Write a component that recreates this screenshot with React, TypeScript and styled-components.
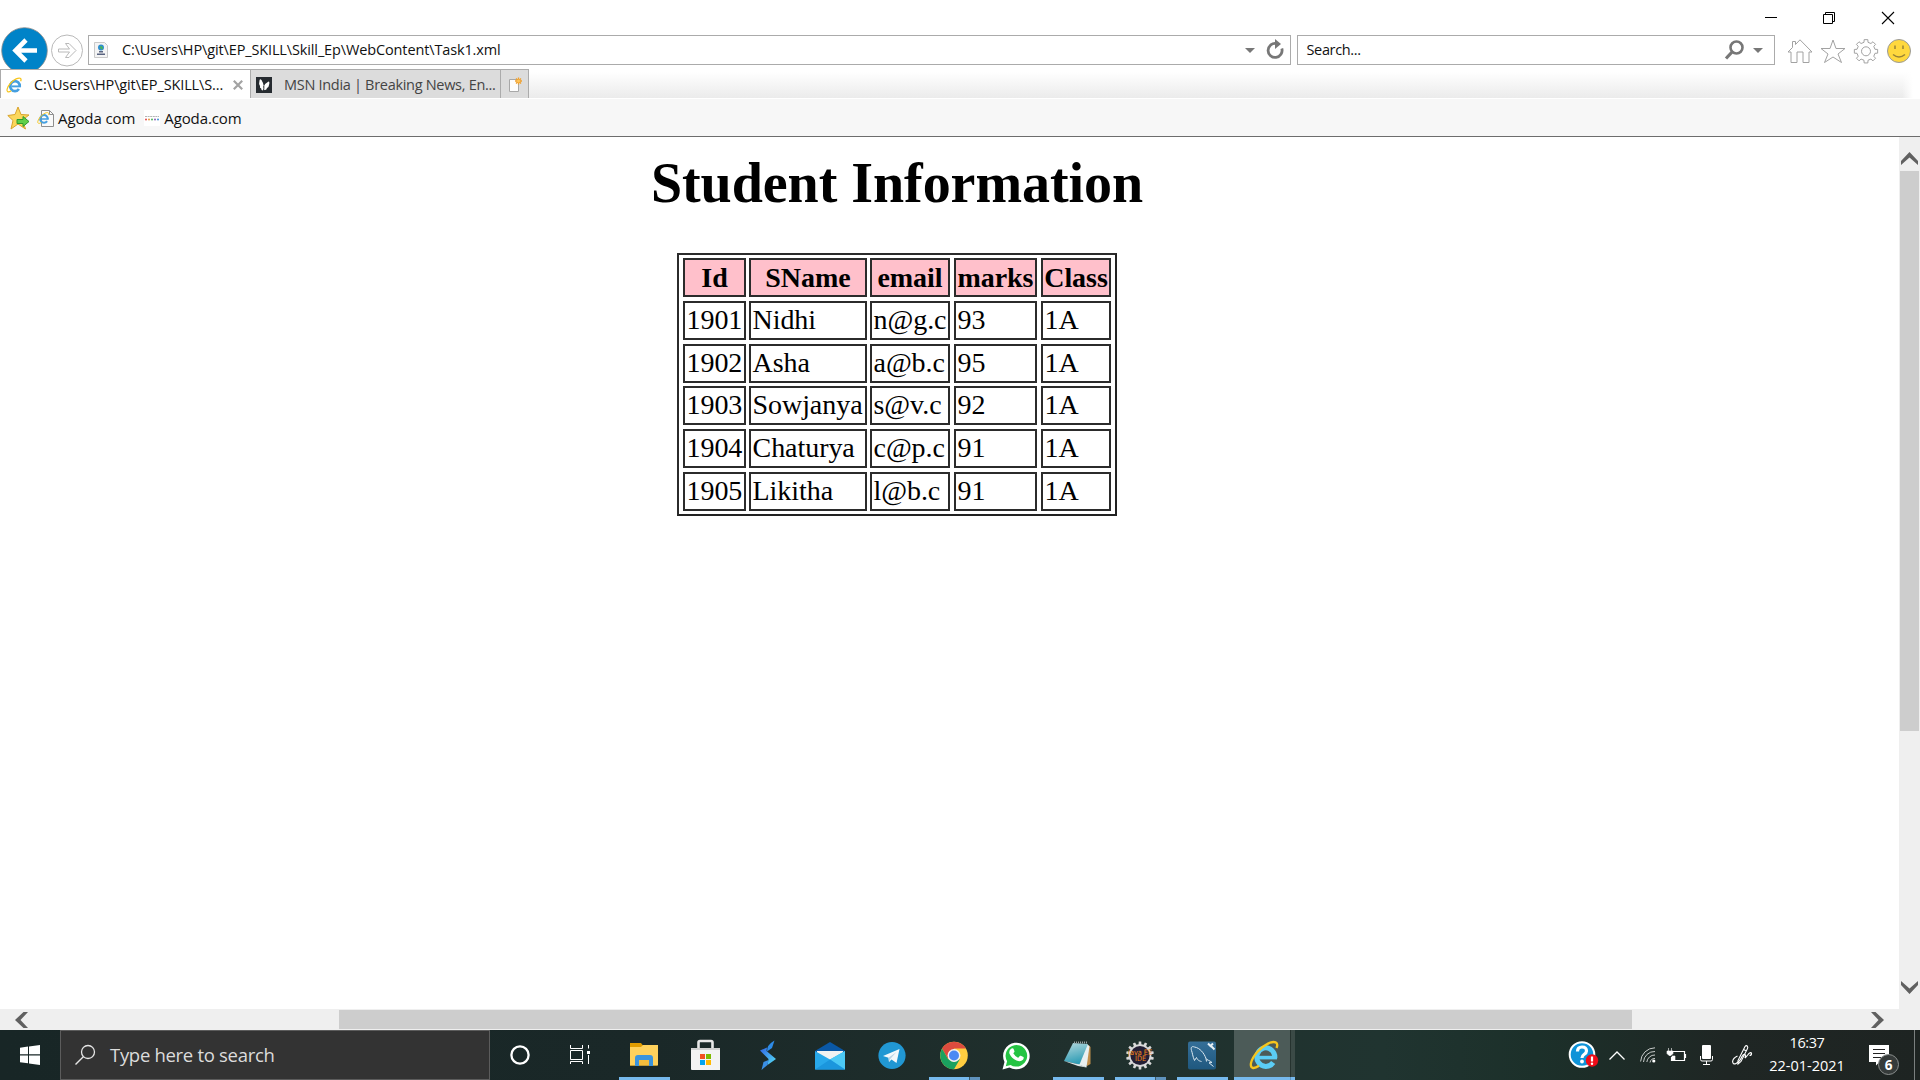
import React from 'react';
import styled, { createGlobalStyle } from 'styled-components';

const Global = createGlobalStyle`
  * { box-sizing: border-box; }
  html, body { margin: 0; padding: 0; background: #fff; }
  body { width: 1920px; height: 1080px; overflow: hidden; }
`;

const Screen = styled.div`
  width: 1920px;
  height: 1080px;
  display: flex;
  flex-direction: column;
  background: #fff;
  overflow: hidden;
  font-family: "Open Sans", "Noto Sans", sans-serif;
`;

const Text = styled.span<{ $size: number; $ls?: number; $color?: string; $ml?: number }>`
  font-size: ${p => p.$size}px;
  letter-spacing: ${p => p.$ls ?? 0}px;
  color: ${p => p.$color ?? '#111'};
  margin-left: ${p => p.$ml ?? 0}px;
  line-height: 22px;
  white-space: pre;
`;

const Icon = styled.svg<{ $w: number; $h?: number; $ml?: number; $mr?: number; $mt?: number }>`
  width: ${p => p.$w}px;
  height: ${p => p.$h ?? p.$w}px;
  margin-left: ${p => p.$ml ?? 0}px;
  margin-right: ${p => p.$mr ?? 0}px;
  margin-top: ${p => p.$mt ?? 0}px;
  flex: none;
  display: block;
  overflow: visible;
`;
const Spacer = styled.div`
  flex: 1;
`;

/* Browser chrome */
const TitleBar = styled.div`
  height: 27px;
  flex: none;
  display: flex;
  justify-content: flex-end;
  padding: 12px 25px 0 0;
  gap: 46px;
`;
const WinIcon = styled.svg`
  width: 13px;
  height: 13px;
  display: block;
  overflow: visible;
`;
const AddressRow = styled.div`
  height: 42px;
  flex: none;
  display: flex;
  overflow: hidden;
`;
const BackIcon = styled.svg`
  width: 49px;
  height: 42px;
  flex: none;
`;
const ForwardIcon = styled.svg`
  width: 34px;
  height: 34px;
  margin: 6px 4px 0 1px;
  flex: none;
`;
const Field = styled.div<{ $w: number }>`
  width: ${p => p.$w}px;
  height: 30px;
  margin-top: 8px;
  margin-right: 6px;
  border: 1px solid #ababab;
  display: flex;
  align-items: center;
  flex: none;
`;
const TabRow = styled.div`
  height: 30px;
  flex: none;
  display: flex;
  background: linear-gradient(#fff 0, #fff 3px, #ebebeb 29px, #fff 29px);
`;
const TabFade = styled.div`
  width: 18px;
  height: 30px;
  margin-left: auto;
  background: linear-gradient(90deg, rgba(255, 255, 255, 0), #fff 60%);
`;
const Tab = styled.div<{ $w: number; $active?: boolean }>`
  width: ${p => p.$w}px;
  height: 29px;
  border-top: 1px solid #ababab;
  border-right: 1px solid #ababab;
  border-left: ${p => (p.$active ? '1px solid #ababab' : '0')};
  background: ${p => (p.$active ? '#fff' : '#dcdcdc')};
  display: flex;
  align-items: center;
  padding-top: 1px;
`;
const FavBar = styled.div`
  height: 38px;
  flex: none;
  background: #f7f7f7;
  border-bottom: 1px solid #6d6d6d;
  display: flex;
  align-items: center;
  padding-top: 1px;
`;

/* Page */
const Viewport = styled.div`
  height: 872px;
  flex: none;
  display: flex;
`;
const Page = styled.div`
  width: 1899px;
  background: #fff;
  display: flex;
  flex-direction: column;
  font-family: "Liberation Serif", serif;
`;
const Heading = styled.h1`
  margin: 14px 0 0;
  width: 1794px;
  text-align: center;
  font-size: 56px;
  line-height: 64px;
  letter-spacing: -0.05px;
  font-weight: 700;
  color: #000;
  white-space: nowrap;
`;
const Sheet = styled.div`
  width: 440px;
  height: 263px;
  margin: 38px 0 0 677px;
  border: 2px solid #2b2b2b;
  border-right-color: #222;
  border-bottom-color: #222;
  padding: 3px 0 0 4px;
  display: grid;
  grid-template-columns: 66px 121px 84px 87px 70px;
  grid-template-rows: 43px 43px 42px 43px 43px 39px;
`;
const Cell = styled.div<{ $head?: boolean; $gap: number }>`
  height: 39px;
  margin-right: ${p => p.$gap}px;
  border: 2px solid #2b2b2b;
  background: ${p => (p.$head ? '#ffc0cb' : '#fff')};
  font-weight: ${p => (p.$head ? 700 : 400)};
  text-align: ${p => (p.$head ? 'center' : 'left')};
  font-size: 28px;
  line-height: 34px;
  letter-spacing: -0.05px;
  padding: ${p => (p.$head ? '1px 0 0' : '0 0 0 1.5px')};
  white-space: nowrap;
  color: #000;
`;
const VScroll = styled.div`
  width: 21px;
  background: #efefef;
  display: flex;
  flex-direction: column;
  align-items: center;
`;
const VThumb = styled.div`
  width: 19px;
  height: 560px;
  margin: 6px 0 auto;
  background: #cdcdcd;
`;
const HScroll = styled.div`
  height: 21px;
  flex: none;
  background: #efefef;
  display: flex;
  align-items: center;
`;
const HThumb = styled.div`
  width: 1293px;
  height: 19px;
  margin-left: 311px;
  margin-right: 239px;
  background: #cdcdcd;
`;

/* Taskbar */
const Taskbar = styled.div`
  height: 50px;
  flex: none;
  display: flex;
  background: linear-gradient(90deg, #182626 0, #1a2828 34%, #20302d 56%, #203430 72%, #1c302a 80%, #1f2624 90%, #1e2422 100%);
`;
const StartButton = styled.div`
  width: 60px;
  display: flex;
  align-items: center;
  justify-content: center;
`;
const SearchBox = styled.div`
  width: 430px;
  height: 50px;
  background: #333;
  border: 1px solid #5c5c5c;
  display: flex;
  align-items: center;
  padding-left: 14px;
`;
const SysButton = styled.div<{ $w: number }>`
  width: ${p => p.$w}px;
  display: flex;
  align-items: center;
`;
const AppButton = styled.div<{ $active?: boolean }>`
  width: 62px;
  height: 50px;
  display: flex;
  flex-direction: column;
  align-items: center;
  justify-content: space-between;
  background: ${p =>
    p.$active
      ? 'linear-gradient(90deg, transparent 1px, #4c5b58 1px, #4c5b58 57px, #26332f 57px, #26332f 58px, #3b4a46 58px)'
      : 'none'};
`;
const AppIcon = styled.svg`
  width: 32px;
  height: 32px;
  margin-top: 9px;
  display: block;
  overflow: visible;
`;
type Kind = 'none' | 'one' | 'many' | 'active';
const underlines: Record<Kind, string> = {
  none: 'none',
  one: '#76b9ed',
  many: 'linear-gradient(90deg, #76b9ed 40px, #3b5a6c 40px, #3b5a6c 41px, #5f93bd 41px)',
  active: 'linear-gradient(90deg, #76b9ed 56px, #5f93bd 56px, #5f93bd 57px, #76b9ed 57px)',
};
const Underline = styled.div<{ $kind: Kind }>`
  height: 3px;
  width: ${p => (p.$kind === 'active' ? 61 : 51)}px;
  align-self: ${p => (p.$kind === 'active' ? 'flex-end' : 'center')};
  background: ${p => underlines[p.$kind]};
`;
const Tray = styled.div`
  margin-left: auto;
  height: 50px;
  width: 352px;
  display: flex;
  align-items: center;
`;
const Clock = styled.div`
  width: 90px;
  height: 50px;
  margin-left: 10px;
  display: flex;
  flex-direction: column;
  align-items: center;
  padding-top: 2px;
  gap: 1px;
`;
const DesktopEdge = styled.div`
  width: 1px;
  height: 50px;
  margin-left: auto;
  margin-right: 5px;
  background: #7b807f;
`;

const IEArt = ({ bright }: { bright?: boolean }) => {
  const blue = bright ? '#5bcdf5' : '#459fe0';
  return (
    <>
      <path d="M26.800 19 A9 9.300 0 1 0 25.200 23.500" fill="none" stroke={blue} strokeWidth="5" />
      <path d="M11 18.600H29" stroke={blue} strokeWidth="3.600" />
      <path
        d="M11 26.800C5.500 30.500 2 29.500 3 24C4.500 17 12 8.500 20 4.600C26.500 1.500 31 3 28.500 9"
        fill="none"
        stroke="#f6c51d"
        strokeWidth="2.300"
      />
    </>
  );
};

const heads = ['Id', 'SName', 'email', 'marks', 'Class'];
const rows = [
  ['1901', 'Nidhi', 'n@g.c', '93', '1A'],
  ['1902', 'Asha', 'a@b.c', '95', '1A'],
  ['1903', 'Sowjanya', 's@v.c', '92', '1A'],
  ['1904', 'Chaturya', 'c@p.c', '91', '1A'],
  ['1905', 'Likitha', 'l@b.c', '91', '1A'],
];
const gaps = [3, 3, 4, 4, 0];

const gearPath = (cx: number, cy: number, r1: number, r2: number, n: number) => {
  const pts: string[] = [];
  for (let i = 0; i < n; i++) {
    const a = (i / n) * Math.PI * 2 - Math.PI / 2;
    const s = (Math.PI * 2) / n;
    [[-0.28, r1], [-0.2, r2], [0.2, r2], [0.28, r1]].forEach(([k, r]) => {
      pts.push(`${(cx + Math.cos(a + k * s) * r).toFixed(2)} ${(cy + Math.sin(a + k * s) * r).toFixed(2)}`);
    });
  }
  return `M${pts.join('L')}Z`;
};

const FolderIcon = () => (
  <AppIcon viewBox="0 0 32 32">
    <path d="M2 4h11l2 2.500h14v20H2z" fill="#e09c00" />
    <path d="M2 8h11l2-2h15v20.500H2z" fill="#ffd15c" />
    <path d="M7 27v-8q0-3 3-3h12q3 0 3 3v8h-4v-6h-10v6z" fill="#3b94dd" />
    <path d="M11 21h10v5h-10z" fill="#f5bd3c" />
  </AppIcon>
);
const StoreIcon = () => (
  <AppIcon viewBox="0 0 32 32">
    <path d="M8.500 10V3.500q0-1.500 1.500-1.500h11q1.500 0 1.500 1.500V10" fill="none" stroke="#e8e8e8" strokeWidth="2.600" />
    <path d="M1 9h29v22H2q-1 0-1-1z" fill="#f3f3f3" />
    <path d="M1 9h29v2H1z" fill="#d2d2d2" />
    <path d="M10 15h5v5h-5z" fill="#f25022" />
    <path d="M16 15h5v5h-5z" fill="#7fba00" />
    <path d="M10 21h5v5h-5z" fill="#00a4ef" />
    <path d="M16 21h5v5h-5z" fill="#ffb900" />
  </AppIcon>
);
const BoltIcon = () => (
  <AppIcon viewBox="0 0 32 32">
    <defs>
      <linearGradient id="bolt" x1="0" y1="0" x2="1" y2="1">
        <stop offset="0" stopColor="#2f63e6" />
        <stop offset="1" stopColor="#56e0f5" />
      </linearGradient>
    </defs>
    <path d="M22.500 1.500 L20 9 L15 12.500 Q14.500 6 22.500 1.500Z" fill="#2d8be8" />
    <path d="M8 11.500 L15 8.500 L14.500 12 L24 20 L15.500 26 L16.500 20 Z" fill="url(#bolt)" />
    <path d="M9.500 31 L11.500 23 L16.500 21 L15.500 26 Z" fill="#3a8fe6" />
  </AppIcon>
);
const MailIcon = () => (
  <AppIcon viewBox="0 0 32 32">
    <path d="M1 12 L16 3 L31 12 V15 H1Z" fill="#0a58a6" />
    <path d="M3 12h26v10H3z" fill="#f2f2f2" />
    <path d="M1 12 L16 20.500 L31 12 V30.500 H1Z" fill="#28a8ea" />
    <path d="M16 20.500 L31 12 V30.500Z" fill="#4cc9f5" />
    <path d="M16 20.500 L31 30.500 H1Z" fill="#1b96dd" />
  </AppIcon>
);
const TelegramIcon = () => (
  <AppIcon viewBox="0 0 32 32">
    <circle cx="16" cy="16.500" r="13.600" fill="#2197d3" />
    <path d="M7 17 L23.500 10 L20.500 24 L15.500 20.500 L13 23 L12.500 18.800 Z" fill="#f4f8fb" />
    <path d="M12.500 18.800 L20.500 13 L14.200 20 L13 23Z" fill="#b9d4e6" />
  </AppIcon>
);
const ChromeIcon = () => (
  <AppIcon viewBox="0 0 32 32">
    <circle cx="16" cy="16.500" r="13.800" fill="#ffcd40" />
    <path d="M4.050 9.600 A13.800 13.800 0 0 1 27.950 9.600 L16 9.600 L10 20Z" fill="#dd4b3e" />
    <path d="M4.050 9.600 A13.800 13.800 0 0 0 16 30.300 L22 19.900 L16 23 L10 20 Z" fill="#1aa15f" />
    <circle cx="16" cy="16.500" r="6.500" fill="#f1f1f1" />
    <circle cx="16" cy="16.500" r="5" fill="#4a89f3" />
  </AppIcon>
);
const WhatsAppIcon = () => (
  <AppIcon viewBox="0 0 32 32">
    <path d="M2.500 30.500 L4.500 23 A13.300 13.300 0 1 1 9.500 28.400 Z" fill="#fff" />
    <path d="M5.800 27.200 L7.100 22.300 A10.800 10.800 0 1 1 10.600 25.900 Z" fill="#25c443" />
    <path d="M11.500 9.500 q1.500-.8 2 .3 l1 2.500 q.2.700-1.200 2 q1.700 3.200 5 4.500 l1.500-1.800 q.5-.5 1 -.2 l2.600 1.300 q.8.800-.4 2.600 q-2.500 2.500-6.500.7 q-5-2.200-7-6.700 q-1-3.300 2-5.200Z" fill="#fff" />
  </AppIcon>
);
const NotepadIcon = () => (
  <AppIcon viewBox="0 0 32 32">
    <defs>
      <linearGradient id="pad" x1="0" y1="0" x2="0.300" y2="1">
        <stop offset="0" stopColor="#b5d9de" />
        <stop offset="1" stopColor="#2f9db5" />
      </linearGradient>
    </defs>
    <path d="M25 5 L28.500 8 L28.500 25 L25 27Z" fill="#c08f4c" />
    <path d="M24 5 L27.500 7 L24.500 28.500 L15 25Z" fill="#e9f0f1" />
    <path d="M11 4 L26 5 L17.500 25.500 L2 22Z" fill="url(#pad)" />
    <path d="M12 3.500h14" stroke="#9aa3a4" strokeWidth="2" strokeDasharray="1 1" />
    <path d="M2 22 L17.500 25.500 L24.500 28.500 L16 27Z" fill="#dfe7e8" />
  </AppIcon>
);
const EclipseText = styled.text`
  font-family: "DejaVu Sans", sans-serif;
  font-size: 7.5px;
  fill: #f58a1c;
`;
const EclipseIcon = () => (
  <AppIcon viewBox="0 0 32 32">
    <path d={gearPath(16, 16.5, 11.3, 14, 14)} fill="#d9d9d9" />
    <circle cx="16" cy="16.500" r="9.600" fill="#241f35" />
    <EclipseText x="4" y="16" textLength="24" lengthAdjust="spacingAndGlyphs">Java EE</EclipseText>
    <EclipseText x="11" y="22.300" textLength="11" lengthAdjust="spacingAndGlyphs">IDE</EclipseText>
  </AppIcon>
);
const MySqlIcon = () => (
  <AppIcon viewBox="0 0 32 32">
    <defs>
      <linearGradient id="sql" x1="0" y1="0" x2="0" y2="1">
        <stop offset="0" stopColor="#356f98" />
        <stop offset="1" stopColor="#1f587f" />
      </linearGradient>
    </defs>
    <rect x="2" y="2.500" width="28" height="28" rx="2" fill="url(#sql)" />
    <path
      d="M8.500 21.500 C6.500 17 6.500 14 5.500 11.500 C4.500 8 6 7 8.500 8 C14 9 18 14 20 19.500 C20.500 21 24 21.500 26 23.500 L23 23.800 L27.500 27.500 M8.500 21.500 L10.500 18.500 C12 22 14 22 15.500 22.500 M20 19.500 L20.500 22.500"
      fill="none"
      stroke="#dce9f1"
      strokeWidth="1"
    />
    <path d="M22 4.500 L24.500 7 L27 4.500 M24.500 6.500 L28.500 10.500" stroke="#e8f0f5" strokeWidth="2" fill="none" />
  </AppIcon>
);
const IETaskIcon = () => (
  <AppIcon viewBox="0 0 32 32">
    <IEArt bright />
  </AppIcon>
);

const apps: { icon: React.FC; kind: Kind }[] = [
  { icon: FolderIcon, kind: 'one' },
  { icon: StoreIcon, kind: 'none' },
  { icon: BoltIcon, kind: 'none' },
  { icon: MailIcon, kind: 'none' },
  { icon: TelegramIcon, kind: 'none' },
  { icon: ChromeIcon, kind: 'many' },
  { icon: WhatsAppIcon, kind: 'none' },
  { icon: NotepadIcon, kind: 'one' },
  { icon: EclipseIcon, kind: 'many' },
  { icon: MySqlIcon, kind: 'one' },
  { icon: IETaskIcon, kind: 'active' },
];

const BadgeText = styled.text<{ $size: number }>`
  font-family: "Open Sans", sans-serif;
  font-weight: 700;
  font-size: ${p => p.$size}px;
  fill: #fff;
  text-anchor: middle;
`;

export default function App() {
  return (
    <>
      <Global />
      <Screen>
        <TitleBar>
          <WinIcon viewBox="0 0 13 13"><path d="M1 5.500h12" stroke="#000" /></WinIcon>
          <WinIcon viewBox="0 0 13 13"><path d="M.5 2.500h9v9h-9z M2.500 2.500v-2h9v9h-2" fill="none" stroke="#000" /></WinIcon>
          <WinIcon viewBox="0 0 13 13"><path d="M0 0 12 12M12 0 0 12" stroke="#000" strokeWidth="1.100" /></WinIcon>
        </TitleBar>

        <AddressRow>
          <BackIcon viewBox="0 0 49 42">
            <circle cx="24.500" cy="23.500" r="22.800" fill="#0083c8" stroke="#8a8a8a" strokeWidth="0.800" />
            <path d="M37 23.500H15M26 13 15.500 23.500 26 34" fill="none" stroke="#fff" strokeWidth="4.600" />
          </BackIcon>
          <ForwardIcon viewBox="0 0 34 34">
            <circle cx="17" cy="17.500" r="15.500" fill="#fff" stroke="#b9b9b9" />
            <path d="M8.500 16h11l-4-5.500h3.500l7 7-7 7H15.500l4-5.500h-11z" fill="#fff" stroke="#b9b9b9" />
          </ForwardIcon>
          <Field $w={1203}>
            <Icon viewBox="0 0 14 16" $w={14} $h={16} $ml={5}>
              <path d="M.5.5h10l3 3v12H.5z" fill="#f4f4f4" stroke="#c9c9c9" />
              <circle cx="7" cy="5.500" r="3" fill="#2f8fd0" />
              <path d="M5.500 5q2-2 3 0t-1 2.500" fill="#49b45a" />
              <path d="M5 9h4v1.500H5zM3 11.500h8v1.500H3z" fill="#5a6480" />
            </Icon>
            <Text $size={14.5} $ls={-0.13} $ml={14}>C:\Users\HP\git\EP_SKILL\Skill_Ep\WebContent\Task1.xml</Text>
            <Spacer />
            <Icon viewBox="0 0 10 5" $w={10} $h={5} $mr={11} $mt={1}><path d="M0 0h10L5 5z" fill="#777" /></Icon>
            <Icon viewBox="0 0 18 20" $w={18} $h={20} $mr={6} $mt={-2}>
              <path d="M10 4.500A7 7 0 1 0 15.800 9.500" fill="none" stroke="#777" strokeWidth="2.800" />
              <path d="M9 0l6 5-6 5z" fill="#777" />
            </Icon>
          </Field>
          <Field $w={478}>
            <Text $size={14.5} $ls={-0.35} $ml={8.5}>Search...</Text>
            <Spacer />
            <Icon viewBox="0 0 19 20" $w={19} $h={20} $mr={9}>
              <circle cx="11.500" cy="7.500" r="6" fill="none" stroke="#777" strokeWidth="2.600" />
              <path d="M7.500 11.500 1 18.500" stroke="#777" strokeWidth="3.200" />
            </Icon>
            <Icon viewBox="0 0 10 5" $w={10} $h={5} $mr={11} $mt={1}><path d="M0 0h10L5 5z" fill="#777" /></Icon>
          </Field>
          <Icon viewBox="0 0 26 25" $w={26} $h={25} $ml={6} $mt={12}>
            <path d="M1 13 5.500 8.500V2.500H8.500V5.500L13 .8 25 13H22V23.500H16V13H10v10.500H4V13z" fill="#fff" stroke="#a2a2a2" />
          </Icon>
          <Icon viewBox="0 0 26 25" $w={26} $h={25} $ml={7} $mt={12}>
            <path d="M13 1 16 9.500H25L18 15 21.500 23.500 13 18 4.500 23.500 8 15 1 9.500H10Z" fill="#fff" stroke="#a2a2a2" />
          </Icon>
          <Icon viewBox="0 0 26 25" $w={26} $h={25} $ml={7} $mt={12}>
            <path d={gearPath(13, 12.3, 9.2, 11.8, 8)} fill="#fff" stroke="#a2a2a2" />
            <circle cx="13" cy="12.300" r="4.500" fill="#fff" stroke="#a2a2a2" />
          </Icon>
          <Icon viewBox="0 0 24 24" $w={24} $ml={8} $mt={12}>
            <circle cx="12" cy="12" r="11.500" fill="#ffd83e" stroke="#9a9a9a" />
            <path d="M8 6.500v3.500M16 6.500v3.500M6 15.500q6 5 12 0" fill="none" stroke="#9a8336" strokeWidth="1.500" />
          </Icon>
        </AddressRow>

        <TabRow>
          <Tab $w={251} $active>
            <Icon viewBox="1 2 30 28" $w={16} $h={16} $ml={5} $mr={12}><IEArt /></Icon>
            <Text $size={14.5} $ls={-0.12}>C:\Users\HP\git\EP_SKILL\S...</Text>
            <Spacer />
            <Icon viewBox="0 0 10 10" $w={10} $mr={7}>
              <path d="M.8.8 9.200 9.200M9.200.8.8 9.200" stroke="#a3a3a3" strokeWidth="2.200" />
            </Icon>
          </Tab>
          <Tab $w={250}>
            <Icon viewBox="0 0 16 16" $w={16} $ml={5} $mr={12}>
              <rect width="16" height="16" fill="#262b30" />
              <path d="M7 13.500Q5 13.500 5.200 11.500Q3.500 11 4 9Q2.500 7 3.500 3.500Q4 1.500 5.500 3Q7.500 6 7.800 9.500Q9.500 6 12.500 4.500Q14 4.500 13 8Q12.800 10.500 11 11Q10.500 13.500 8.500 13Z" fill="#fff" />
              <path d="M7.500 14.500Q8 11 7.800 9" fill="none" stroke="#262b30" />
            </Icon>
            <Text $size={14.5} $ls={-0.3} $color="#444">MSN India | Breaking News, En...</Text>
          </Tab>
          <Tab $w={28}>
            <Icon viewBox="0 0 16 16" $w={16} $ml={7}>
              <path d="M1.500 2.500h9v12h-9z" fill="#fdfdfd" stroke="#a8a8a8" />
              <path d="M10.500.5v7M7 4h7M8 1.500l5 5M13 1.500l-5 5" stroke="#f0a02c" strokeWidth="1.300" />
              <circle cx="10.500" cy="4" r="1.500" fill="#ffc65a" />
            </Icon>
          </Tab>
          <TabFade />
        </TabRow>

        <FavBar>
          <Icon viewBox="0 0 23 24" $w={23} $h={24} $ml={7}>
            <path d="M11 1 14 8.500 22 9 15.500 14 18.500 23 11 18 4 23 6 14.500.8 9.500 8 8.500Z" fill="#fbd75b" stroke="#d9a32c" />
            <path d="M10 13.500h6V10.500L22 15.500 16 20.500V17.500H10z" fill="#5fd04a" stroke="#2f9a2c" />
          </Icon>
          <Icon viewBox="0 0 16 17" $w={16} $h={17} $ml={8}>
            <path d="M3.500.5h8l4 4v12h-12z" fill="#fafafa" stroke="#8f8f8f" />
            <path d="M11.500.5v4h4" fill="none" stroke="#8f8f8f" />
            <svg x="-1" y="2" width="12.500" height="12" viewBox="1 2 30 28"><IEArt /></svg>
          </Icon>
          <Text $size={15} $ls={-0.1} $ml={4}>Agoda com</Text>
          <Icon viewBox="0 0 16 16" $w={16} $ml={9}>
            <path d="M0 0h16v16H0z" fill="#fff" />
            <path d="M1 6.500h14" stroke="#b5b5b5" strokeDasharray="2 .6" />
            <circle cx="2" cy="9.500" r="1" fill="#e0494d" />
            <circle cx="5" cy="9.500" r="1" fill="#e89a45" />
            <circle cx="8" cy="9.500" r="1" fill="#4cb45c" />
            <circle cx="11" cy="9.500" r="1" fill="#8a5fb5" />
            <circle cx="14" cy="9.500" r="1" fill="#4590d8" />
          </Icon>
          <Text $size={15} $ls={-0.1} $ml={4}>Agoda.com</Text>
        </FavBar>

        <Viewport>
          <Page>
            <Heading>Student Information</Heading>
            <Sheet>
              {heads.map((h, i) => <Cell key={h} $head $gap={gaps[i]}>{h}</Cell>)}
              {rows.map(r => r.map((c, i) => <Cell key={r[0] + i} $gap={gaps[i]}>{c}</Cell>))}
            </Sheet>
          </Page>
          <VScroll>
            <Icon viewBox="0 0 17 13" $w={17} $h={13} $mt={15}>
              <path d="M0 9 8.500 0 17 9V13L8.500 5.500 0 13z" fill="#606060" />
            </Icon>
            <VThumb />
            <Icon viewBox="0 0 17 13" $w={17} $h={13} $mt={0}>
              <path d="M0 0 8.500 7.500 17 0V4L8.500 13 0 4z" fill="#606060" />
            </Icon>
            <Icon viewBox="0 0 1 1" $w={1} $h={15} />
          </VScroll>
        </Viewport>
        <HScroll>
          <Icon viewBox="0 0 13 16" $w={13} $h={16} $ml={15}>
            <path d="M8.500 0H13L5.500 8 13 16H8.500L0 8z" fill="#606060" />
          </Icon>
          <HThumb />
          <Icon viewBox="0 0 13 16" $w={13} $h={16}>
            <path d="M4.500 0H0L7.500 8 0 16H4.500L13 8z" fill="#606060" />
          </Icon>
        </HScroll>

        <Taskbar>
          <StartButton>
            <Icon viewBox="0 0 20 20" $w={20}>
              <path d="M0 2.800 8 1.600V9.300H0zM9 1.500 20 0V9.300H9zM0 10.400H8V18.300L0 17.200zM9 10.400H20V20L9 18.400z" fill="#fff" />
            </Icon>
          </StartButton>
          <SearchBox>
            <Icon viewBox="0 0 20 20" $w={20}>
              <circle cx="13" cy="7" r="6.500" fill="none" stroke="#e6e6e6" strokeWidth="1.300" />
              <path d="M8.300 11.700.5 19.500" stroke="#e6e6e6" strokeWidth="1.400" />
            </Icon>
            <Text $size={18.5} $ls={-0.3} $color="#dcdcdc" $ml={15}>Type here to search</Text>
          </SearchBox>
          <SysButton $w={60}>
            <Icon viewBox="0 0 20 20" $w={20} $ml={20}>
              <circle cx="10" cy="10" r="8.600" fill="none" stroke="#fff" strokeWidth="2.300" />
            </Icon>
          </SysButton>
          <SysButton $w={63}>
            <Icon viewBox="0 0 20 20" $w={20} $ml={20}>
              <path d="M.5 0v3.500h12V0M.5 5.500h12v9H.5zM.5 19v-2.500h12V19M18.500 0v3.500M18.500 10v9" fill="none" stroke="#fff" />
              <path d="M17 6h3v3h-3z" fill="#fff" />
            </Icon>
          </SysButton>
          {apps.map((a, i) => {
            const Art = a.icon;
            return (
              <AppButton key={i} $active={a.kind === 'active'}>
                <Art />
                <Underline $kind={a.kind} />
              </AppButton>
            );
          })}
          <Tray>
            <Icon viewBox="0 0 30 28" $w={30} $h={28}>
              <circle cx="14" cy="13.500" r="12.300" fill="#0f93d8" stroke="#fff" strokeWidth="2" />
              <path d="M9.500 10.500Q9.500 6 14 6T18.500 10Q18.500 12 16 13.500Q14 14.800 14 17" fill="none" stroke="#fff" strokeWidth="3.200" />
              <circle cx="14" cy="20.500" r="1.900" fill="#fff" />
              <circle cx="24" cy="19.500" r="6.200" fill="#f00c18" />
              <path d="M24 15.500v5" stroke="#fff" strokeWidth="2.200" />
              <circle cx="24" cy="22.700" r="1.200" fill="#fff" />
            </Icon>
            <Icon viewBox="0 0 16 9" $w={16} $h={9} $ml={11}>
              <path d="M.5 8.500 8 1l7.500 7.500" fill="none" stroke="#fff" strokeWidth="1.300" />
            </Icon>
            <Icon viewBox="0 0 16 16" $w={16} $ml={15}>
              <path d="M.6 14.500A14.500 14.500 0 0 1 15 .8" fill="none" stroke="#c9cccb" />
              <path d="M3.500 15A11 11 0 0 1 15 4.500M6.800 15A8 8 0 0 1 15 8M10 15.500A5 5 0 0 1 15 11.500" fill="none" stroke="#c9cccb" />
              <circle cx="13.800" cy="14" r="1.600" fill="#fff" />
            </Icon>
            <Icon viewBox="0 0 20 15" $w={20} $h={15} $ml={11}>
              <path d="M6 3.500h11.500v9H4.500V9M18.500 6v4" fill="none" stroke="#fff" strokeWidth="1.200" />
              <path d="M1.500 0v3M4.500 0v3M0 3h6v2.500L4 7.500H2L0 5.500zM5 8h3v4H5z" fill="#fff" stroke="#fff" strokeWidth=".6" />
            </Icon>
            <Icon viewBox="0 0 13 20" $w={13} $h={20} $ml={13}>
              <rect x="2" y="0" width="9" height="14" rx="1" fill="#fff" />
              <path d="M.5 11v3.500q0 1.500 1.500 1.500h9q1.500 0 1.500-1.500V11M6.500 16v3.500M3 19.500h7" fill="none" stroke="#fff" />
            </Icon>
            <Icon viewBox="0 0 20 20" $w={20} $ml={19}>
              <path d="M6 15.500 13 1.500Q14.500-.3 15.500 1.500 16 2.500 15.500 3.500L9 16.500 6 19zM11.500 4.500l3 1.500" fill="none" stroke="#fff" strokeWidth="1.100" />
              <path d="M5.500 11Q1 13 .6 16.500 1 20 4 18.500 8 16.500 10 11.500 11.500 9 13 9.500 14 10.500 13 13 15 11 16.500 9 19 6.500 19.500 8.500 19.500 10.500 17.500 10.500" fill="none" stroke="#fff" strokeWidth="1.200" />
            </Icon>
            <Clock>
              <Text $size={14.5} $ls={-0.4} $color="#fff">16:37</Text>
              <Text $size={14.5} $color="#fff">22-01-2021</Text>
            </Clock>
            <Icon viewBox="0 0 30 30" $w={30} $ml={17} $mt={10}>
              <path d="M0 0h20v17H10.500L7 20.500V17H0z" fill="#fff" />
              <path d="M4 4.500h12M4 8.500h12M4 12.500h8" stroke="#222" strokeWidth="1.200" />
              <circle cx="19.500" cy="19.500" r="10" fill="#363b3a" stroke="#8b8f8e" />
              <BadgeText $size={13.5} x="19.500" y="24.500">6</BadgeText>
            </Icon>
            <DesktopEdge />
          </Tray>
        </Taskbar>
      </Screen>
    </>
  );
}
